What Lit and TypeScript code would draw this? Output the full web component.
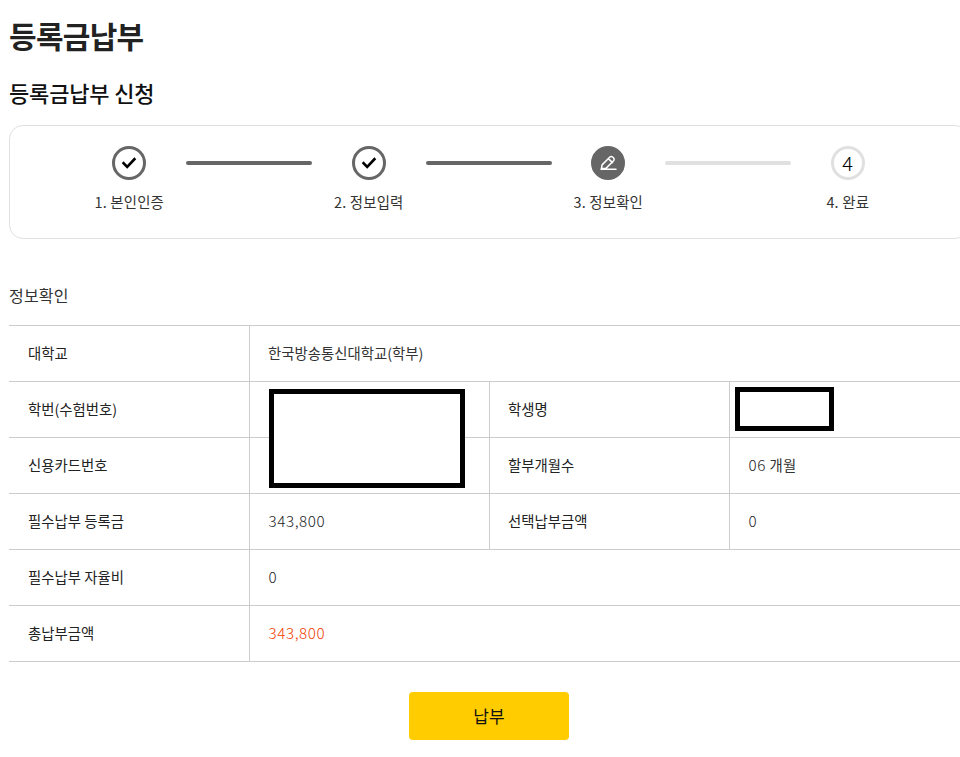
import { LitElement, html, css, svg } from "lit";
import { customElement } from "lit/decorators.js";

const check = svg`<path d="M11.6 17.2l3.6 3.6 7.2-7.6" fill="none" stroke="#000" stroke-width="2.6" stroke-linecap="square" stroke-linejoin="miter"/>`;

@customElement("app-root")
export class AppRoot extends LitElement {
  static styles = css`
    :host {
      display: block;
      width: 960px;
      height: 757px;
      overflow: hidden;
      background: #fff;
      font-family: "Noto Sans CJK KR", "Noto Sans", sans-serif;
      color: #222;
    }
    .page {
      position: relative;
      width: 960px;
      margin-left: 9px;
      padding-top: 13px;
    }
    h1 {
      margin: 0;
      font-size: 30px;
      line-height: 44px;
      font-weight: 700;
      letter-spacing: -0.7px;
      color: #222;
    }
    h2 {
      margin: 14px 0 0;
      font-size: 22px;
      line-height: 42px;
      font-weight: 500;
      letter-spacing: -0.15px;
      color: #111;
    }
    .steps {
      margin-top: 12px;
      box-sizing: border-box;
      height: 114px;
      border: 1px solid #e0e0e0;
      border-radius: 14px;
      display: grid;
      grid-template-columns: repeat(4, 1fr);
      padding-top: 20px;
    }
    .step {
      position: relative;
      margin-left: -1px;
      display: flex;
      flex-direction: column;
      align-items: center;
      font-size: 14.4px;
      letter-spacing: 0.2px;
      line-height: 20px;
      color: #333;
    }
    .step.link::after {
      content: "";
      position: absolute;
      top: 15px;
      left: calc(50% + 57px);
      width: 126px;
      height: 4px;
      border-radius: 2px;
      background: #666;
    }
    .step.link.todo::after { background: #e0e0e0; }
    .mark {
      box-sizing: border-box;
      width: 34px;
      height: 34px;
      border-radius: 50%;
      border: 3px solid #666;
      display: flex;
      align-items: center;
      justify-content: center;
      margin-bottom: 12px;
    }
    .mark svg { display: block; width: 34px; height: 34px; flex: none; }
    .mark.now { background: #666; }
    .mark.next {
      border-color: #e0e0e0;
      font-size: 20px;
      font-weight: 300;
      color: #000;
    }
    h3 {
      margin: 44px 0 0;
      height: 42px;
      font-size: 16px;
      line-height: 24px;
      font-weight: 400;
      letter-spacing: 0.2px;
      color: #333;
    }
    table {
      width: 960px;
      table-layout: fixed;
      border-collapse: collapse;
      font-size: 14.4px;
    }
    col { width: 240px; }
    tr { height: 56px; border-top: 1px solid #ccc; border-bottom: 1px solid #ccc; }
    th, td {
      padding: 0 0 2px 18.5px;
      text-align: left;
      font-weight: 400;
      border-left: 1px solid #ccc;
      line-height: 20px;
      color: #333;
    }
    th { color: #222; }
    tr > :first-child { border-left: 0; padding-left: 19px; }
    .digits { font-size: 15.2px; letter-spacing: 0.6px; font-weight: 300; color: #222; }
    td.digits { padding-left: 19px; padding-bottom: 4px; }
    td.months { padding-left: 19px; letter-spacing: 0.3px; }
    .sum.digits { color: #f03c00; }
    .redact {
      position: absolute;
      box-sizing: border-box;
      border: 5px solid #000;
      background: #fff;
    }
    .r1 { left: 260px; top: 389px; width: 196px; height: 99px; }
    .r2 { left: 726px; top: 387px; width: 99px; height: 44px; }
    .actions {
      margin-top: 30px;
      display: flex;
      justify-content: center;
    }
    button {
      width: 160px;
      height: 48px;
      border: 0;
      border-radius: 4px;
      padding: 0 0 2px;
      background: #ffcc00;
      color: #111;
      font: inherit;
      font-size: 17px;
    }
  `;

  private stepMark(kind: string, n = "") {
    if (kind === "done") {
      return html`<span class="mark"><svg viewBox="0 0 34 34" aria-hidden="true">${check}</svg></span>`;
    }
    if (kind === "now") {
      return html`<span class="mark now"><svg viewBox="0 0 34 34" aria-hidden="true">
        <path d="M10.4 22.6l.7-3.7 7.8-7.9a1.9 1.9 0 0 1 2.7 0l1 1a1.9 1.9 0 0 1 0 2.7l-7.9 7.9z M17.4 12.6l4.1 4 M10 23.3h15" fill="none" stroke="#fff" stroke-width="1.5" stroke-linejoin="round" stroke-linecap="round"/>
      </svg></span>`;
    }
    return html`<span class="mark next">${n}</span>`;
  }

  render() {
    return html`
      <div class="page">
        <h1>등록금납부</h1>
        <h2>등록금납부 신청</h2>
        <div class="steps">
          <div class="step link">${this.stepMark("done")}<span>1. 본인인증</span></div>
          <div class="step link">${this.stepMark("done")}<span>2. 정보입력</span></div>
          <div class="step link todo">${this.stepMark("now")}<span>3. 정보확인</span></div>
          <div class="step">${this.stepMark("next", "4")}<span>4. 완료</span></div>
        </div>
        <h3>정보확인</h3>
        <table>
          <colgroup><col /><col /><col /><col /></colgroup>
          <tr><th>대학교</th><td colspan="3">한국방송통신대학교(학부)</td></tr>
          <tr><th>학번(수험번호)</th><td></td><th>학생명</th><td></td></tr>
          <tr><th>신용카드번호</th><td></td><th>할부개월수</th><td class="months"><span class="digits">06</span> 개월</td></tr>
          <tr><th>필수납부 등록금</th><td class="digits">343,800</td><th>선택납부금액</th><td class="digits">0</td></tr>
          <tr><th>필수납부 자율비</th><td class="digits" colspan="3">0</td></tr>
          <tr><th>총납부금액</th><td class="sum digits" colspan="3">343,800</td></tr>
        </table>
        <div class="actions"><button type="button">납부</button></div>
        <div class="redact r1"></div>
        <div class="redact r2"></div>
      </div>
    `;
  }
}
